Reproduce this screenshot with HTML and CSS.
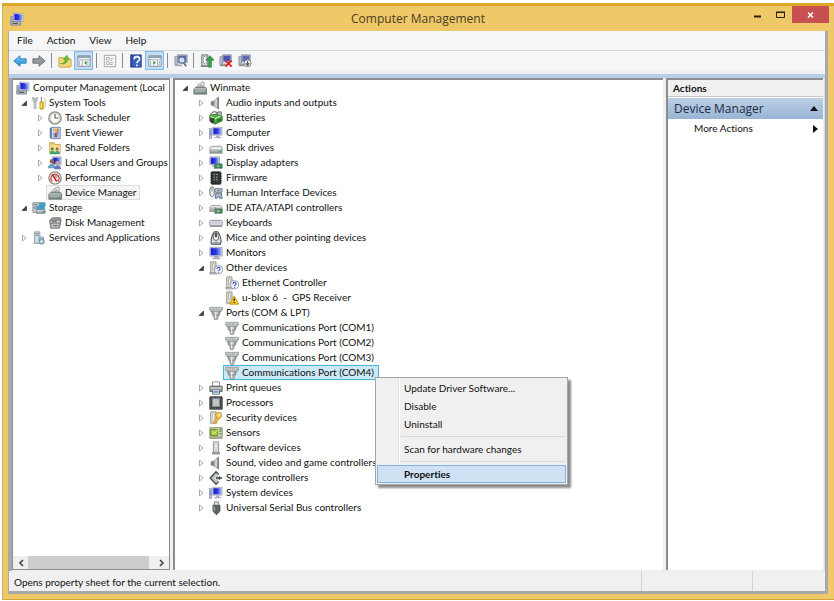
FILE: index.html
```html
<!DOCTYPE html>
<html lang="en">
<head>
<meta charset="utf-8">
<title>Computer Management</title>
<link rel="stylesheet" href="styles.css">
</head>
<body>
<svg class="sprite" aria-hidden="true">
  <defs>
    <linearGradient id="g-screen" x1="0" y1="0" x2="1" y2="0"><stop offset="0" stop-color="#1a1ad0"/><stop offset=".5" stop-color="#2c35dd"/><stop offset="1" stop-color="#9db4f2"/></linearGradient>
    <linearGradient id="g-metal" x1="0" y1="0" x2="1" y2="0"><stop offset="0" stop-color="#777"/><stop offset=".5" stop-color="#e4e8e8"/><stop offset="1" stop-color="#777"/></linearGradient>
    <linearGradient id="g-drive" x1="0" y1="0" x2="0" y2="1"><stop offset="0" stop-color="#f0f2f2"/><stop offset="1" stop-color="#8d9595"/></linearGradient>
    <linearGradient id="g-blue" x1="0" y1="0" x2="0" y2="1"><stop offset="0" stop-color="#7fd0f8"/><stop offset="1" stop-color="#1c88cf"/></linearGradient>
  </defs>
  <symbol id="i-pc" viewBox="0 0 16 16"><path d="M1 5h3v9H1z" fill="#b7bdc9" stroke="#737b92" stroke-width=".8"/><path d="M2 7h1M2 9h1" stroke="#3555b5"/><path d="M4 1l11 1v9l-11-1z" fill="#d9dde6" stroke="#9299a8" stroke-width=".7"/><path d="M5 2l9 1v7l-9-1z" fill="url(#g-screen)"/><path d="M8 11h4l1 2H7z" fill="#a7adb8"/><path d="M1 11h11v4H1z" fill="#aeb4bd" stroke="#6d7480" stroke-width=".7"/><path d="M3 13h6" stroke="#484e59" stroke-width="1.200"/></symbol>
  <symbol id="i-computer" viewBox="0 0 16 16"><path d="M0 3h3v11H0z" fill="#c4cad8" stroke="#8088a0" stroke-width=".8"/><path d="M1.500 5v6" stroke="#4d83d2"/><path d="M4 1.500h11v9H4z" fill="#d4d9e6" stroke="#9aa1b5" stroke-width=".8"/><path d="M5 2.500h9v7H5z" fill="url(#g-screen)"/><path d="M8 10.500h4v2H8zM6 12.500h8v1.500H6z" fill="#adb3c0"/></symbol>
  <symbol id="i-monitor" viewBox="0 0 16 16"><path d="M1 1.500h14v10H1z" fill="#d4d9e6" stroke="#9aa1b5"/><path d="M2 2.500h12v8H2z" fill="url(#g-screen)"/><path d="M6 11.500h5v2H6zM4 13.500h9V15H4z" fill="#a5abb8"/></symbol>
  <symbol id="i-display" viewBox="0 0 16 16"><path d="M1 1h11v9H1z" fill="#ccd3e4" stroke="#9aa1b5"/><path d="M2 2h9v7H2z" fill="url(#g-screen)"/><path d="M4 10h5v3H4z" fill="#a3abba"/><path d="M7 9h8v5H7z" fill="#2e8c50" stroke="#4b6770" stroke-width=".8"/><path d="M9 10.500h3v2H9z" fill="#9bbcaa"/><path d="M6.500 9v6" stroke="#777"/></symbol>
  <symbol id="i-tools" viewBox="0 0 16 16"><path d="M3.500 6v8.500" stroke="#8b9299" stroke-width="3"/><path d="M3.500 6v8" stroke="#e6eaec" stroke-width="1.200"/><path d="M1 1v4l2.500 2L6 5V1L4.500 3h-2z" fill="#c0c6ca" stroke="#80878c" stroke-width=".7"/><path d="M10 1h1.500v7H10z" fill="#999"/><path d="M9 7h4v8H9z" fill="#e8bd26" stroke="#b1860d" stroke-width=".7"/><path d="M10.500 8v6" stroke="#fff08b"/><path d="M13 2l2 2v9" fill="none" stroke="#c8b76a"/></symbol>
  <symbol id="i-clock" viewBox="0 0 16 16"><circle cx="8" cy="8" r="7" fill="#e9e9e2" stroke="#8d9190" stroke-width="1.600"/><circle cx="8" cy="8" r="5" fill="#fff" stroke="#cfc9aa" stroke-width=".7"/><path d="M8 3.500V8h4" fill="none" stroke="#5a5a51" stroke-width="1.300"/></symbol>
  <symbol id="i-event" viewBox="0 0 16 16"><path d="M2 2h3v12H2z" fill="#5b77ac"/><path d="M4 1.500h10v13H4z" fill="#cfdcea" stroke="#667fa3"/><path d="M6 3h3v3H6z" fill="#e0b839"/><path d="M10 3h2v5h-2z" fill="#d15b43"/><path d="M6 8h6v5H6z" fill="#7ba1ce"/><path d="M9 7v6" stroke="#b13535" stroke-width="1.500"/></symbol>
  <symbol id="i-shared" viewBox="0 0 16 16"><path d="M2 2h5l1 2h6v10H2z" fill="#edcb69" stroke="#b99238" stroke-width=".8"/><path d="M3 5h11v8H3z" fill="#f8e09a"/><circle cx="5" cy="9" r="1.800" fill="#49924d"/><path d="M2 15c0-5 6-5 6 0z" fill="#43a557"/><circle cx="10.500" cy="9" r="1.800" fill="#a6733d"/><path d="M7.500 15c0-5 6-5 6 0z" fill="#4f9b84"/></symbol>
  <symbol id="i-users" viewBox="0 0 16 16"><path d="M5 1h10v9H5z" fill="#cfd5e4" stroke="#9aa1b5"/><path d="M6 2h8v7H6z" fill="url(#g-screen)"/><circle cx="4.500" cy="6" r="2.500" fill="#8f643b"/><path d="M0 14c0-7 8-7 9 0z" fill="#6aa3be"/><circle cx="10.500" cy="8" r="2.200" fill="#d8a27c"/><path d="M7 15c0-6 8-6 8 0z" fill="#6574bd"/></symbol>
  <symbol id="i-perf" viewBox="0 0 16 16"><circle cx="8" cy="8" r="7" fill="#fff" stroke="#8f8888" stroke-width="1.500"/><path d="M5 12a4.700 4.700 0 1 1 6 0" fill="none" stroke="#cf4141" stroke-width="1.500"/><path d="M5 4l5 8" stroke="#bf2525" stroke-width="1.800"/><path d="M9 4v3M11 6l-2 2" stroke="#777"/></symbol>
  <symbol id="i-devmgr" viewBox="0 0 16 16"><path d="M4 8l2-4 5-3 2 1-1 6z" fill="#eef1f1" stroke="#858c8c" stroke-width=".9"/><path d="M6 7l2-3 3-1v4z" fill="#b4baba"/><path d="M1 9l2-2h11l2 2v6H1z" fill="#8b9492" stroke="#5d6664" stroke-width=".8"/><path d="M1 9h14" stroke="#d7dcda"/><path d="M2 11h12v1H2z" fill="#c8cecb"/><path d="M10 12.500h4v2h-4z" fill="#5d9a66"/></symbol>
  <symbol id="i-storage" viewBox="0 0 16 16"><path d="M1 2h8v4H1zM1 7h6v6H1z" fill="#d4dadd" stroke="#7b868e"/><path d="M2 4h5M2 9h4" stroke="#747d83"/><path d="M9 2h6v4H9z" fill="#39aadd" stroke="#4b7686" stroke-width=".7"/><ellipse cx="10" cy="8" rx="5" ry="2.500" fill="#3e9ed0"/><path d="M5 10h10v4H5z" fill="url(#g-drive)" stroke="#79827f"/><path d="M12 12h2" stroke="#32a34b" stroke-width="1.500"/></symbol>
  <symbol id="i-disk" viewBox="0 0 16 16"><path d="M2 5l3-3h9l1 3-2 9H3z" fill="#969b99" stroke="#5c605e" stroke-width=".8"/><path d="M2 5h12v3H2z" fill="#dde0df" stroke="#777"/><path d="M4 9h8v4H4z" fill="#c2c6c5"/><path d="M4 6.500h6M6 11h5" stroke="#4f5351"/></symbol>
  <symbol id="i-services" viewBox="0 0 16 16"><path d="M3 1h6v13H3z" fill="#d4dfe6" stroke="#8397a3"/><path d="M4 3h4M4 5h4" stroke="#6e8492"/><path d="M8 7h5v4H8z" fill="#b6dbee" stroke="#7797a9"/><circle cx="11" cy="12" r="3" fill="#aac5d5" stroke="#668292"/><circle cx="11" cy="12" r="1" fill="#fff"/><path d="M1 14h8" stroke="#9aabb5"/></symbol>
  <symbol id="i-speaker" viewBox="0 0 16 16"><path d="M2 6h4v5H2z" fill="#777f80"/><path d="M5 6l6-5v14l-6-4z" fill="url(#g-metal)" stroke="#8a9092" stroke-width=".8"/><path d="M10.500 1.500v13" stroke="#7b8183" stroke-width="1.500"/></symbol>
  <symbol id="i-battery" viewBox="0 0 16 16"><path d="M2 5c0-6 9-5 9 0" fill="none" stroke="#333"/><path d="M1 5l9-2 5 3v5l-8 4-6-4z" fill="#43b038" stroke="#315e2e"/><path d="M2 6l5 3 7-4" fill="none" stroke="#bceeb2" stroke-width="1.400"/><path d="M1 8h5v6H3L1 12z" fill="#3c413b"/><path d="M10 1h4v4h-4z" fill="#bcc6b8" stroke="#666"/><path d="M9 9h5v3H9z" fill="#247b25"/></symbol>
  <symbol id="i-drive" viewBox="0 0 16 16"><path d="M2 7l2-1h10l1 2v6H1V8z" fill="url(#g-drive)" stroke="#858d8b" stroke-width=".9"/><path d="M2 8.500h12" stroke="#fff"/><path d="M11 12h3" stroke="#39b13f" stroke-width="1.700"/></symbol>
  <symbol id="i-chip" viewBox="0 0 16 16"><path d="M2 2h12v12H2z" fill="#888" stroke="#777" stroke-dasharray="1 1" stroke-width="2"/><path d="M3 1h10v14H3z" fill="#343838" stroke="#191c1c"/><path d="M5 4h6M5 7h6M5 10h6" stroke="#a9adad" stroke-dasharray="2 1"/></symbol>
  <symbol id="i-hid" viewBox="0 0 16 16"><path d="M1 4c0-4 5-4 5 0v5c0 4-5 4-5 0z" fill="#eef0ef" stroke="#555b5e"/><path d="M3.500 2v4" stroke="#666"/><path d="M7 3h8v4H7z" fill="#c6d0dc" stroke="#687585"/><path d="M8 8h6l1 6h-3l-1-2-2 2H7z" fill="#a5b5c9" stroke="#59687b"/><path d="M9 5h4" stroke="#55799a"/></symbol>
  <symbol id="i-ide" viewBox="0 0 16 16"><path d="M1 7l2-2h10l2 2v5H1z" fill="url(#g-drive)" stroke="#8d9592" stroke-width=".9"/><path d="M7 9h8v5H7z" fill="#3f8a4e" stroke="#66736a" stroke-width=".8"/><path d="M9 10.500h3v2H9z" fill="#b3cbb7"/><path d="M7 7v8" stroke="#777"/></symbol>
  <symbol id="i-keyboard" viewBox="0 0 16 16"><rect x="1" y="5" width="14" height="6.500" rx="1.500" fill="#e4e6e9" stroke="#7c8086"/><path d="M3 7h10M3 9h10" stroke="#b8bcc2"/><path d="M1 11.500h14" stroke="#696d73"/></symbol>
  <symbol id="i-mouse" viewBox="0 0 16 16"><path d="M3 15C1 12 4 3 6 1h4c3 3 5 11 3 14z" fill="#d8dbdd" stroke="#4b5052" stroke-width="1.200"/><path d="M6 2l-1 7 3 2 3-2-1-7" fill="#fff" stroke="#4b5052"/><path d="M8 2v5" stroke="#222" stroke-width="1.800"/><path d="M5 13h6" fill="none" stroke="#8d9396"/></symbol>
  <symbol id="i-software" viewBox="0 0 16 16"><path d="M5 1h6v12H5z" fill="#e5e8e9" stroke="#81888a"/><path d="M7 3h2v8H7z" fill="#fff" stroke="#a8adaf" stroke-width=".7"/><path d="M4 13h8v2H4z" fill="#b0b5b7" stroke="#777" stroke-width=".7"/></symbol>
  <symbol id="i-unknown" viewBox="0 0 16 16"><path d="M2 1h6v12H2z" fill="#e9e9cf" stroke="#888b84"/><path d="M4 3h2v7H4z" fill="#fff" stroke="#aaa"/><path d="M1 13h8v2H1z" fill="#bcbeb8" stroke="#888" stroke-width=".6"/><circle cx="11" cy="10" r="4.600" fill="#f2f4fc" stroke="#8c97b8"/><path d="M9.300 9c0-2.500 3.400-2.500 3.400 0 0 1.200-1.700 1-1.700 2.400M11 12.400v1" fill="none" stroke="#3b4fae" stroke-width="1.200"/></symbol>
  <symbol id="i-warning" viewBox="0 0 16 16"><path d="M2 1h6v12H2z" fill="#e9e9cf" stroke="#888b84"/><path d="M4 3h2v7H4z" fill="#fff" stroke="#aaa"/><path d="M1 13h8v2H1z" fill="#bcbeb8"/><path d="M10.500 5.500L15.500 15h-10z" fill="#f7cb1c" stroke="#bd9310"/><path d="M10.500 8.500v3M10.500 12.500v1.200" stroke="#2e2a11" stroke-width="1.400"/></symbol>
  <symbol id="i-port" viewBox="0 0 16 16"><path d="M.5 1.500h15v2.500h-2v2h-11V4h-2z" fill="#cdd2d2" stroke="#868c8c" stroke-width=".8"/><path d="M4 3.500h8" stroke="#6d7474" stroke-dasharray="1 1"/><path d="M3 6h10l-1 4.500H4z" fill="url(#g-metal)" stroke="#868c8c" stroke-width=".8"/><path d="M5.500 10.500h5v2.500l-1 2.500h-3l-1-2.500z" fill="#b4baba" stroke="#7b8280" stroke-width=".8"/><path d="M7.500 7v7" stroke="#f3f6f5"/><path d="M1.500 4v2.500M14.500 4v2.500" stroke="#9aa0a0"/></symbol>
  <symbol id="i-printer" viewBox="0 0 16 16"><path d="M4 1h8v5H4z" fill="#fff" stroke="#888"/><path d="M1 6h14v6H1z" fill="#a1a5a7" stroke="#55595b"/><path d="M2 8h12" stroke="#eee"/><path d="M4 10h8v5H4z" fill="#eef4fb" stroke="#62676a"/><path d="M5 12.500h6" stroke="#437fb4" stroke-width="1.500"/></symbol>
  <symbol id="i-cpu" viewBox="0 0 16 16"><path d="M1 1h14v14H1z" fill="#3c3f40" stroke="#222"/><path d="M2 2h12v12H2z" fill="none" stroke="#828687" stroke-dasharray="1 1"/><path d="M4 3h8v9H4z" fill="#c0c3c4" stroke="#8d9092"/></symbol>
  <symbol id="i-security" viewBox="0 0 16 16"><path d="M2 1h6v12H2z" fill="#eeeade" stroke="#87847b"/><path d="M4 3h2v8H4z" fill="#fff" stroke="#aaa" stroke-width=".7"/><path d="M1 13h7v2H1z" fill="#bbb"/><circle cx="11" cy="5" r="3.500" fill="#f6cb62" stroke="#c88d22"/><circle cx="12" cy="4" r="1" fill="#fff"/><path d="M9 7l-3 5v2h3v-2l3-4" fill="#efb947" stroke="#c88d22" stroke-width=".8"/></symbol>
  <symbol id="i-sensor" viewBox="0 0 16 16"><path d="M1 2h14v12H1z" fill="#d8dfbc" stroke="#6f7d51"/><path d="M2 4h8v7H2z" fill="#a8cc42" stroke="#5b8124"/><path d="M3 6l3 3 4-5" fill="none" stroke="#eaf4a9"/><path d="M12 4h2M12 6h2M12 9h2" stroke="#367a43" stroke-width="1.300"/><path d="M2 12.500h12" stroke="#7b846e"/></symbol>
  <symbol id="i-storctl" viewBox="0 0 16 16"><path d="M11 4L8 1 1.500 8 8 15l3-3" fill="none" stroke="#4b5051" stroke-width="1.800"/><path d="M4 8l4-4 2 2-2 2 2 2-2 2z" fill="#d4d8d8" stroke="#898f90"/><path d="M8 8h7M12 6v4" stroke="#404647" stroke-width="1.600"/></symbol>
  <symbol id="i-usb" viewBox="0 0 16 16"><path d="M6 1h5v4H6z" fill="#ddd" stroke="#777"/><path d="M4.500 5h8v6l-2 3h-4l-2-3z" fill="#5f6466" stroke="#4a4e50"/><path d="M6 6v5" stroke="#afb3b5" stroke-width="1.300"/><path d="M8.500 14v2" stroke="#444" stroke-width="1.500"/></symbol>
  <symbol id="i-back" viewBox="0 0 16 16"><path d="M1 8l7-6v3.500h7v5H8V14z" fill="url(#g-blue)" stroke="#287fb5"/></symbol>
  <symbol id="i-forward" viewBox="0 0 16 16"><path d="M15 8L8 2v3.500H1v5h7V14z" fill="#969a9c" stroke="#686c6e"/></symbol>
  <symbol id="i-up" viewBox="0 0 16 16"><path d="M1 4h5l1 2h8v8l-1 1H2l-1-1z" fill="#f2d777" stroke="#caa447"/><path d="M3 11c4 0 5-2 5-5H6l4-4.500L13 6h-2c0 4-3 6-8 5z" fill="#72bf38" stroke="#4b972a" stroke-width=".7"/></symbol>
  <symbol id="i-pane-left" viewBox="0 0 16 16"><path d="M1 2h14v12H1z" fill="#f8fafb" stroke="#7e8c9b"/><path d="M1 3.500h14" stroke="#8796a8" stroke-width="2"/><path d="M1 6.500h14M6 7v7M3 8v5M12.500 8v5" stroke="#929eac" stroke-width=".9"/><path d="M11 7.500v5L8 10z" fill="#34a32d"/></symbol>
  <symbol id="i-pane-right" viewBox="0 0 16 16"><path d="M1 2h14v12H1z" fill="#f8fafb" stroke="#7e8c9b"/><path d="M1 3.500h14" stroke="#8796a8" stroke-width="2"/><path d="M1 6.500h14M11 7v7M3 8v5M13 8v5" stroke="#929eac" stroke-width=".9"/><path d="M6 7.500v5L9 10z" fill="#34a32d"/></symbol>
  <symbol id="i-props" viewBox="0 0 16 16"><path d="M1.500 1.500h13v13h-13z" fill="#fafafa" stroke="#9a9fa3"/><path d="M4 4h3v3H4zM4 9h3v3H4zM8 5h4M8 7h3M8 10h4M8 12h3" fill="none" stroke="#a4a9ac"/></symbol>
  <symbol id="i-help" viewBox="0 0 16 16"><path d="M2 1h12v14H2z" fill="#3c5fc1" stroke="#2a438c"/><path d="M3 1v14" stroke="#2c468e" stroke-width="2"/><path d="M6 6c0-4 6-4 6 0 0 2.500-3 2-3 4.500M9 12v2" fill="none" stroke="#fff" stroke-width="1.800"/></symbol>
  <symbol id="i-scan" viewBox="0 0 16 16"><path d="M1 3h3v9H1z" fill="#b9bec9" stroke="#727991" stroke-width=".7"/><path d="M4 1h11v9H4z" fill="#b9c0cf" stroke="#8790a2"/><path d="M5 2h9v7H5z" fill="#5361a9"/><path d="M1 12h8v2H1z" fill="#aaa"/><circle cx="9" cy="7" r="3.500" fill="#c6e5f4" stroke="#6f7f93" stroke-width="1.300"/><path d="M11 10l3 4" stroke="#607387" stroke-width="2"/></symbol>
  <symbol id="i-update" viewBox="0 0 16 16"><path d="M2 1h7v13H2z" fill="#d4dadb" stroke="#596567"/><path d="M4 3h3v8H4z" fill="#fff" stroke="#7e8a8c" stroke-dasharray="2 1"/><path d="M1 14h10" stroke="#727b7c" stroke-width="1.500"/><path d="M10 15V7H7l4.500-5L16 7h-3v8z" fill="#37a44c" stroke="#257035" stroke-width=".7"/></symbol>
  <symbol id="i-remove" viewBox="0 0 16 16"><path d="M1 3h3v9H1z" fill="#b9bec9" stroke="#727991" stroke-width=".7"/><path d="M4 1h10v8H4z" fill="#b9c0cf" stroke="#8790a2"/><path d="M5 2h8v6H5z" fill="#4a55b5"/><path d="M1 11h8v3H1z" fill="#999"/><path d="M7.500 7.500l7 7M14.500 7.500l-7 7" stroke="#df2a24" stroke-width="2.200"/></symbol>
  <symbol id="i-disable" viewBox="0 0 16 16"><path d="M1 3h3v9H1z" fill="#b9bec9" stroke="#727991" stroke-width=".7"/><path d="M4 1h10v8H4z" fill="#b9c0cf" stroke="#8790a2"/><path d="M5 2h8v6H5z" fill="#606bb8"/><path d="M1 11h7v3H1z" fill="#999"/><circle cx="11" cy="10.500" r="4" fill="#f4f5f5" stroke="#717575"/><path d="M11 8v4M9 10.500l2 2.500 2-2.500" fill="none" stroke="#4d5252" stroke-width="1.200"/></symbol>
  <symbol id="i-closed" viewBox="0 0 8 8"><path d="M2.500 1v6L6 4z" fill="#fff" stroke="#a0a0a0" stroke-width=".9"/></symbol>
  <symbol id="i-open" viewBox="0 0 8 8"><path d="M6.500 2v4.500H2z" fill="#404040" stroke="#222" stroke-width=".6"/></symbol>
</svg>

<div class="window">
  <header class="titlebar">
    <svg class="icon app-icon"><use href="#i-pc"/></svg>
    <h1>Computer Management</h1>
    <div class="window-controls">
      <button aria-label="Minimize"><svg width="9" height="8"><path d="M1 5.500h7" stroke="#2a210c" stroke-width="2"/></svg></button>
      <button aria-label="Maximize"><svg width="9" height="8"><path d="M.5 1.500h8v5h-8zM0 1h9" fill="none" stroke="#2a210c"/></svg></button>
      <button class="close" aria-label="Close"><svg width="8" height="8"><path d="M1 1.500l5 5M6 1.500l-5 5" stroke="#fff" stroke-width="1.500"/></svg></button>
    </div>
  </header>

  <div class="client">
    <nav class="menubar"><button>File</button><button>Action</button><button>View</button><button>Help</button></nav>
    <div class="toolbar">
      <button aria-label="Back"><svg class="icon"><use href="#i-back"/></svg></button>
      <button aria-label="Forward"><svg class="icon"><use href="#i-forward"/></svg></button>
      <i class="sep"></i>
      <button aria-label="Up one level"><svg class="icon"><use href="#i-up"/></svg></button>
      <button class="on" aria-label="Console tree"><svg class="icon"><use href="#i-pane-left"/></svg></button>
      <i class="sep"></i>
      <button aria-label="Properties"><svg class="icon"><use href="#i-props"/></svg></button>
      <i class="sep"></i>
      <button aria-label="Help"><svg class="icon"><use href="#i-help"/></svg></button>
      <button class="on" aria-label="Action pane"><svg class="icon"><use href="#i-pane-right"/></svg></button>
      <i class="sep"></i>
      <button aria-label="Scan for hardware changes"><svg class="icon"><use href="#i-scan"/></svg></button>
      <i class="sep"></i>
      <button aria-label="Update driver"><svg class="icon"><use href="#i-update"/></svg></button>
      <button aria-label="Uninstall"><svg class="icon"><use href="#i-remove"/></svg></button>
      <button aria-label="Disable"><svg class="icon"><use href="#i-disable"/></svg></button>
    </div>
    <div class="strip"></div>

    <main class="panes">
      <section class="pane console">
        <ul class="tree">
          <li><span class="item"><svg class="icon"><use href="#i-pc"/></svg>Computer Management (Local</span>
            <ul>
              <li><button class="exp" aria-label="Collapse"><svg><use href="#i-open"/></svg></button><span class="item"><svg class="icon"><use href="#i-tools"/></svg>System Tools</span>
                <ul>
                  <li><button class="exp" aria-label="Expand"><svg><use href="#i-closed"/></svg></button><span class="item"><svg class="icon"><use href="#i-clock"/></svg>Task Scheduler</span></li>
                  <li><button class="exp" aria-label="Expand"><svg><use href="#i-closed"/></svg></button><span class="item"><svg class="icon"><use href="#i-event"/></svg>Event Viewer</span></li>
                  <li><button class="exp" aria-label="Expand"><svg><use href="#i-closed"/></svg></button><span class="item"><svg class="icon"><use href="#i-shared"/></svg>Shared Folders</span></li>
                  <li><button class="exp" aria-label="Expand"><svg><use href="#i-closed"/></svg></button><span class="item"><svg class="icon"><use href="#i-users"/></svg>Local Users and Groups</span></li>
                  <li><button class="exp" aria-label="Expand"><svg><use href="#i-closed"/></svg></button><span class="item"><svg class="icon"><use href="#i-perf"/></svg>Performance</span></li>
                  <li><i class="exp"></i><span class="item current"><svg class="icon"><use href="#i-devmgr"/></svg>Device Manager</span></li>
                </ul>
              </li>
              <li><button class="exp" aria-label="Collapse"><svg><use href="#i-open"/></svg></button><span class="item"><svg class="icon"><use href="#i-storage"/></svg>Storage</span>
                <ul>
                  <li><i class="exp"></i><span class="item"><svg class="icon"><use href="#i-disk"/></svg>Disk Management</span></li>
                </ul>
              </li>
              <li><button class="exp" aria-label="Expand"><svg><use href="#i-closed"/></svg></button><span class="item"><svg class="icon"><use href="#i-services"/></svg>Services and Applications</span></li>
            </ul>
          </li>
        </ul>
        <div class="scrollbar">
          <button aria-label="Scroll left"><svg width="6" height="8"><path d="M5 1L2 4l3 3" fill="none" stroke="#444" stroke-width="1.600"/></svg></button>
          <div class="track"><div class="thumb"></div></div>
          <button aria-label="Scroll right"><svg width="6" height="8"><path d="M1 1l3 3-3 3" fill="none" stroke="#444" stroke-width="1.600"/></svg></button>
        </div>
      </section>

      <section class="pane devices">
        <ul class="tree">
          <li><button class="exp" aria-label="Collapse"><svg><use href="#i-open"/></svg></button><span class="item"><svg class="icon"><use href="#i-devmgr"/></svg>Winmate</span>
            <ul>
              <li><button class="exp" aria-label="Expand"><svg><use href="#i-closed"/></svg></button><span class="item"><svg class="icon"><use href="#i-speaker"/></svg>Audio inputs and outputs</span></li>
              <li><button class="exp" aria-label="Expand"><svg><use href="#i-closed"/></svg></button><span class="item"><svg class="icon"><use href="#i-battery"/></svg>Batteries</span></li>
              <li><button class="exp" aria-label="Expand"><svg><use href="#i-closed"/></svg></button><span class="item"><svg class="icon"><use href="#i-computer"/></svg>Computer</span></li>
              <li><button class="exp" aria-label="Expand"><svg><use href="#i-closed"/></svg></button><span class="item"><svg class="icon"><use href="#i-drive"/></svg>Disk drives</span></li>
              <li><button class="exp" aria-label="Expand"><svg><use href="#i-closed"/></svg></button><span class="item"><svg class="icon"><use href="#i-display"/></svg>Display adapters</span></li>
              <li><button class="exp" aria-label="Expand"><svg><use href="#i-closed"/></svg></button><span class="item"><svg class="icon"><use href="#i-chip"/></svg>Firmware</span></li>
              <li><button class="exp" aria-label="Expand"><svg><use href="#i-closed"/></svg></button><span class="item"><svg class="icon"><use href="#i-hid"/></svg>Human Interface Devices</span></li>
              <li><button class="exp" aria-label="Expand"><svg><use href="#i-closed"/></svg></button><span class="item"><svg class="icon"><use href="#i-ide"/></svg>IDE ATA/ATAPI controllers</span></li>
              <li><button class="exp" aria-label="Expand"><svg><use href="#i-closed"/></svg></button><span class="item"><svg class="icon"><use href="#i-keyboard"/></svg>Keyboards</span></li>
              <li><button class="exp" aria-label="Expand"><svg><use href="#i-closed"/></svg></button><span class="item"><svg class="icon"><use href="#i-mouse"/></svg>Mice and other pointing devices</span></li>
              <li><button class="exp" aria-label="Expand"><svg><use href="#i-closed"/></svg></button><span class="item"><svg class="icon"><use href="#i-monitor"/></svg>Monitors</span></li>
              <li><button class="exp" aria-label="Collapse"><svg><use href="#i-open"/></svg></button><span class="item"><svg class="icon"><use href="#i-unknown"/></svg>Other devices</span>
                <ul>
                  <li><i class="exp"></i><span class="item"><svg class="icon"><use href="#i-unknown"/></svg>Ethernet Controller</span></li>
                  <li><i class="exp"></i><span class="item"><svg class="icon"><use href="#i-warning"/></svg>u-blox 6 &nbsp;- &nbsp;GPS Receiver</span></li>
                </ul>
              </li>
              <li><button class="exp" aria-label="Collapse"><svg><use href="#i-open"/></svg></button><span class="item"><svg class="icon"><use href="#i-port"/></svg>Ports (COM &amp; LPT)</span>
                <ul>
                  <li><i class="exp"></i><span class="item"><svg class="icon"><use href="#i-port"/></svg>Communications Port (COM1)</span></li>
                  <li><i class="exp"></i><span class="item"><svg class="icon"><use href="#i-port"/></svg>Communications Port (COM2)</span></li>
                  <li><i class="exp"></i><span class="item"><svg class="icon"><use href="#i-port"/></svg>Communications Port (COM3)</span></li>
                  <li class="anchor"><i class="exp"></i><span class="item selected"><svg class="icon"><use href="#i-port"/></svg>Communications Port (COM4)</span>
                    <div class="context-menu" role="menu">
                      <button role="menuitem">Update Driver Software...</button>
                      <button role="menuitem">Disable</button>
                      <button role="menuitem">Uninstall</button>
                      <hr>
                      <button role="menuitem">Scan for hardware changes</button>
                      <hr>
                      <button class="hot" role="menuitem">Properties</button>
                    </div>
                  </li>
                </ul>
              </li>
              <li><button class="exp" aria-label="Expand"><svg><use href="#i-closed"/></svg></button><span class="item"><svg class="icon"><use href="#i-printer"/></svg>Print queues</span></li>
              <li><button class="exp" aria-label="Expand"><svg><use href="#i-closed"/></svg></button><span class="item"><svg class="icon"><use href="#i-cpu"/></svg>Processors</span></li>
              <li><button class="exp" aria-label="Expand"><svg><use href="#i-closed"/></svg></button><span class="item"><svg class="icon"><use href="#i-security"/></svg>Security devices</span></li>
              <li><button class="exp" aria-label="Expand"><svg><use href="#i-closed"/></svg></button><span class="item"><svg class="icon"><use href="#i-sensor"/></svg>Sensors</span></li>
              <li><button class="exp" aria-label="Expand"><svg><use href="#i-closed"/></svg></button><span class="item"><svg class="icon"><use href="#i-software"/></svg>Software devices</span></li>
              <li><button class="exp" aria-label="Expand"><svg><use href="#i-closed"/></svg></button><span class="item"><svg class="icon"><use href="#i-speaker"/></svg>Sound, video and game controllers</span></li>
              <li><button class="exp" aria-label="Expand"><svg><use href="#i-closed"/></svg></button><span class="item"><svg class="icon"><use href="#i-storctl"/></svg>Storage controllers</span></li>
              <li><button class="exp" aria-label="Expand"><svg><use href="#i-closed"/></svg></button><span class="item"><svg class="icon"><use href="#i-computer"/></svg>System devices</span></li>
              <li><button class="exp" aria-label="Expand"><svg><use href="#i-closed"/></svg></button><span class="item"><svg class="icon"><use href="#i-usb"/></svg>Universal Serial Bus controllers</span></li>
            </ul>
          </li>
        </ul>
      </section>

      <aside class="pane actions">
        <h2>Actions</h2>
        <button class="group">Device Manager<svg width="8" height="5"><path d="M4 0l4 5H0z" fill="#111"/></svg></button>
        <button class="more">More Actions<svg width="5" height="8"><path d="M0 0l5 4-5 4z" fill="#111"/></svg></button>
      </aside>
    </main>

    <footer class="status"><span>Opens property sheet for the current selection.</span><span></span><span></span></footer>
  </div>
</div>
</body>
</html>
```
FILE: styles.css
```css
* { box-sizing: border-box; }

body {
  margin: 0;
  min-height: 100vh;
  display: flex;
  background: #fff;
  color: #101010;
  font: 10px/15px Lato, "Open Sans", sans-serif;
  font-variant-ligatures: none;
}

button {
  margin: 0;
  padding: 0;
  border: 0;
  background: none;
  color: inherit;
  font: inherit;
}

ul { margin: 0; padding: 0; list-style: none; }
svg { display: block; flex: none; }
.sprite { position: absolute; width: 0; height: 0; }
.icon { width: 14px; height: 14px; }

.window {
  flex: 1;
  display: flex;
  flex-direction: column;
  margin: 3px 0 1px 2px;
  padding: 0 6px 6px;
  background: #efc868;
  border-top: 3px solid #dea827;
  box-shadow: inset 1px 0 #d5ae55, inset 0 -1px #d9a33c;
}

/* Title bar */
.titlebar {
  display: grid;
  grid-template-columns: 1fr auto 1fr;
  height: 25px;
  align-items: center;
}
.titlebar .app-icon { margin-left: 2px; }
.titlebar h1 {
  margin: 0;
  font: 12px/24px "Open Sans", sans-serif;
  color: #4a3d20;
}
.window-controls {
  display: flex;
  align-self: start;
  justify-content: flex-end;
  margin-right: -1px;
}
.window-controls button {
  width: 23px;
  height: 17px;
  display: flex;
  align-items: center;
  justify-content: center;
}
.window-controls .close { width: 37px; background: #c75050; }

.client {
  flex: 1;
  display: flex;
  flex-direction: column;
  background: #f0f0f0;
  border: solid #a9a9a9;
  border-width: 0 3px 3px 1px;
}

.menubar {
  display: flex;
  height: 20px;
  padding-left: 1px;
  background: #f5f6f7;
  border-bottom: 1px solid #d5d8dc;
}
.menubar button { padding: 0 7px; }

.toolbar {
  display: flex;
  height: 19px;
  padding-left: 1px;
  background: #f5f6f7;
}
.toolbar button {
  width: 19px;
  display: flex;
  align-items: center;
  justify-content: center;
}
.toolbar .on { background: #c2dcf3; border: 1px solid #84b9e5; }
.toolbar .sep { width: 1px; margin: 2px 3px; background: #8c8c8c; }

.strip { height: 8px; border-bottom: 4px solid #b9cde5; }

/* Panes */
.panes {
  flex: 1;
  display: grid;
  grid-template-columns: 158px minmax(0, 1fr) 157px;
  gap: 3px;
  padding: 0 1px 1px 3px;
  background: linear-gradient(90deg, #a9a9a9 3px, #f0f0f0 3px);
  border-right: 1px solid #d3dff0;
}
.pane { background: #fff; border: solid #8b8e91; }

.console {
  display: flex;
  flex-direction: column;
  justify-content: space-between;
  border-width: 2px 1px 1px;
}
.devices { border-width: 2px 0 0 2px; }
.actions { border-width: 2px 0 0 2px; }

.tree li { white-space: nowrap; }
.tree ul { padding-left: 16px; }
.console .tree { overflow: hidden; padding-left: 1px; }
.console .tree > li > ul { padding-left: 4px; }
.devices .tree { padding-left: 4px; }

.exp {
  display: inline-flex;
  align-items: center;
  justify-content: center;
  width: 12px;
  height: 15px;
  vertical-align: top;
}
.exp svg { width: 8px; height: 8px; }

.item {
  display: inline-flex;
  align-items: center;
  gap: 3px;
  height: 15px;
  padding: 0 2px 0 1px;
  border: 1px solid transparent;
  line-height: 13px;
  vertical-align: top;
}
.item.current { background: #f5f5f5; border-color: #dedede; }
.item.selected { padding-right: 4px; background: #cbe8f6; border-color: #4db2dc; }

.scrollbar { display: flex; height: 13px; background: #f0f0f0; }
.scrollbar button {
  width: 15px;
  display: flex;
  align-items: center;
  justify-content: center;
}
.track { flex: 1; }
.thumb { width: 96%; height: 100%; background: #cdcdcd; }

/* Context menu */
.anchor { position: relative; height: 15px; }
.context-menu {
  position: absolute;
  z-index: 1;
  top: 12px;
  left: 164px;
  width: 193px;
  display: flex;
  flex-direction: column;
  padding: 1px;
  background: linear-gradient(90deg, transparent 22px, #e0e0e0 22px, #e0e0e0 23px, #fff 23px, #fff 24px, transparent 24px) #f0f0f0;
  border: 1px solid #a5a5a5;
  box-shadow: 3px 3px 2px rgba(0, 0, 0, .45);
}
.context-menu button {
  height: 18px;
  padding-left: 26px;
  border: 1px solid transparent;
  line-height: 16px;
  text-align: left;
}
.context-menu hr {
  height: 1px;
  margin: 3px 1px 3px 24px;
  border: 0;
  background: #d8d8d8;
}
.context-menu .hot { background: #cfe2f4; border-color: #7fb3df; font-weight: 700; }

/* Actions pane */
.actions h2 {
  margin: 0;
  height: 17px;
  padding-left: 5px;
  background: #f0f0f0;
  border-bottom: 1px solid #c3c6cb;
  font-size: 10px;
  line-height: 17px;
}
.actions button {
  display: flex;
  align-items: center;
  justify-content: space-between;
  width: 100%;
  padding-right: 5px;
}
.actions .group {
  height: 21px;
  margin-top: 1px;
  padding-left: 6px;
  background: linear-gradient(#bdd0e6, #98b4d4);
  color: #1d2c45;
  font: 12px/20px "Open Sans", sans-serif;
}
.actions .more { height: 19px; padding-left: 26px; }

.status { display: flex; height: 20px; line-height: 22px; padding-left: 5px; }
.status span { width: 72px; border-right: 1px solid #d4d4d4; }
.status span:first-child { flex: 1; }
.status span:nth-child(2) { width: 111px; }
.status span:last-child { border: 0; }
```
